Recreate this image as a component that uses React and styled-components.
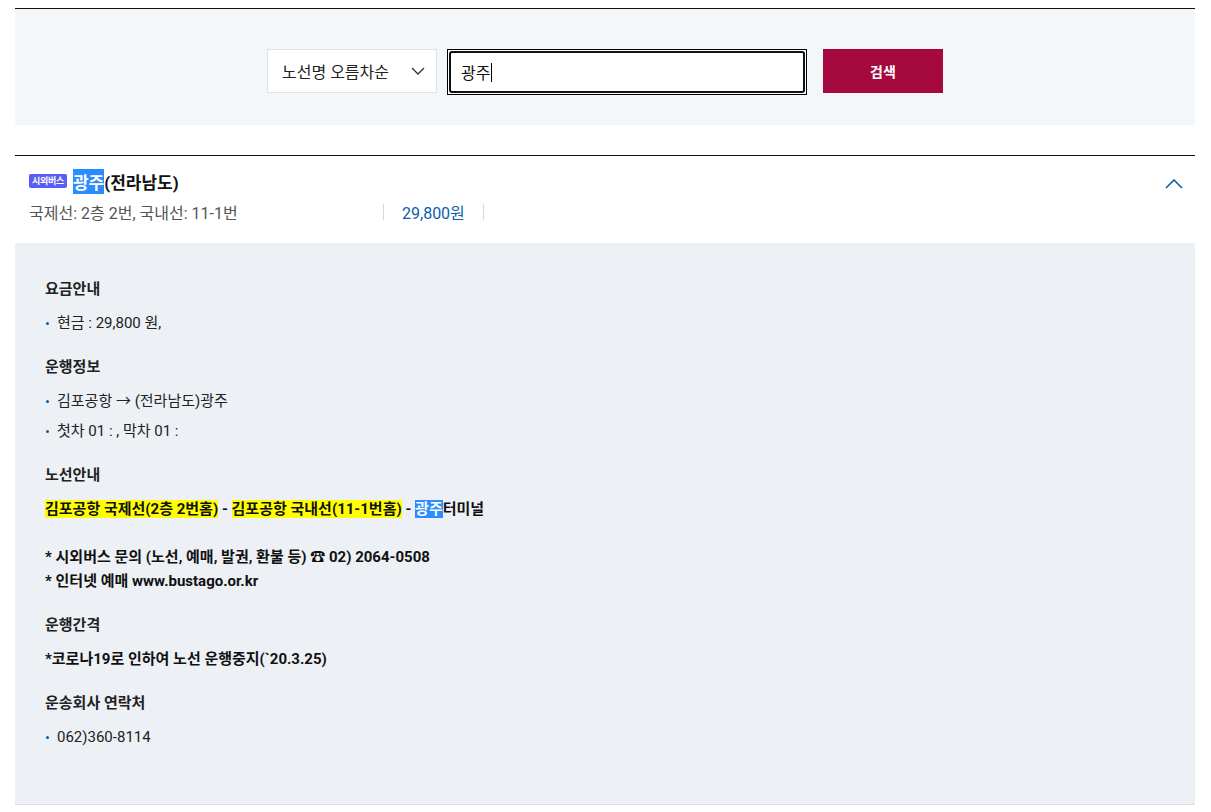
import React from "react";
import styled, { createGlobalStyle } from "styled-components";

const GlobalStyle = createGlobalStyle`
  html, body { margin: 0; padding: 0; background: #fff; }
  body {
    font-family: Roboto, "Noto Sans CJK KR", sans-serif;
    color: #222;
  }
  * { box-sizing: border-box; }
`;

const Page = styled.div`
  padding: 8px 16px 0 15px;
`;

const SearchPanel = styled.div`
  border-top: 1px solid #111;
  background: #f4f7fa;
  display: flex;
  justify-content: center;
  align-items: flex-start;
  padding: 40px 0 30px;
`;

const SelectBox = styled.div`
  width: 170px;
  height: 44px;
  background: #fff;
  border: 1px solid #dfe3e8;
  display: flex;
  align-items: center;
  justify-content: space-between;
  padding: 0 11px 0 14px;
  font-size: 16px;
  color: #222;
`;

const InputFrame = styled.div`
  width: 360px;
  height: 46px;
  margin-left: 10px;
  border: 1px solid #000;
  padding: 1px;
  background: #fff;
  display: flex;
`;

const InputInner = styled.div`
  flex: 1;
  border: 2px solid #111;
  border-radius: 3px;
  display: flex;
  align-items: center;
  padding: 0 10px;
  font-size: 16px;
  color: #111;
`;

const Caret = styled.span`
  display: inline-block;
  width: 1px;
  height: 19px;
  background: #000;
  margin-left: 1px;
`;

const SearchButton = styled.button`
  width: 120px;
  height: 44px;
  margin-left: 16px;
  border: none;
  background: #a6093d;
  color: #fff;
  font-family: Roboto, "Noto Sans CJK KR", sans-serif;
  font-size: 14px;
  font-weight: 700;
  cursor: pointer;
`;

const ResultList = styled.div`
  margin-top: 30px;
  border-top: 1px solid #111;
`;

const ResultHeader = styled.div`
  background: #fff;
  padding: 12px 12px 20px 14px;
`;

const TitleRow = styled.div`
  display: flex;
  align-items: center;
  justify-content: space-between;
  height: 26px;
`;

const Title = styled.div`
  display: flex;
  align-items: center;
  font-size: 17px;
  font-weight: 700;
  color: #111;
`;

const Badge = styled.span`
  display: inline-flex;
  align-items: center;
  height: 14px;
  padding: 0 3px;
  margin-right: 6px;
  background: #5b5cf3;
  border-radius: 2px;
  color: #fff;
  font-size: 9px;
  font-weight: 700;
  line-height: 1;
  letter-spacing: -0.3px;
`;

const Selected = styled.span`
  background: #2b8cff;
  color: #fff;
`;

const Marked = styled.span`
  background: #ffff00;
`;

const ToggleIcon = styled.svg`
  display: block;
  margin-top: 5px;
`;

const SubRow = styled.div`
  display: flex;
  align-items: center;
  margin-top: 7px;
  height: 22px;
  font-size: 16px;
`;

const SubInfo = styled.div`
  width: 354px;
  color: #555;
`;

const Divider = styled.span`
  width: 1px;
  height: 16px;
  background: #d6dadf;
`;

const Price = styled.div`
  padding: 0 18px;
  color: #0b5ea8;
`;

const Detail = styled.div`
  background: #edf0f5;
  border-bottom: 1px solid #dadde2;
  padding: 36px 30px 52px;
`;

const Section = styled.section`
  margin-bottom: ${(p) => p.$gap ?? 19}px;
  &:last-child { margin-bottom: 0; }
`;

const Heading = styled.h3`
  margin: 0 0 9px;
  font-size: 15px;
  line-height: 20px;
  font-weight: 700;
  color: #222;
`;

const BulletList = styled.ul`
  list-style: none;
  margin: 0;
  padding: 0;
`;

const BulletItem = styled.li`
  position: relative;
  padding-left: 12px;
  font-size: 15px;
  line-height: 30px;
  color: #222;
  &::before {
    content: "";
    position: absolute;
    left: 1px;
    top: 14px;
    width: 3px;
    height: 3px;
    border-radius: 50%;
    background: #0b5ea8;
  }
`;

const StrongLine = styled.p`
  margin: ${(p) => p.$top ?? 0}px 0 0;
  font-size: 15px;
  font-weight: 700;
  line-height: ${(p) => p.$lh ?? 30}px;
  color: #111;
`;

export default function App() {
  return (
    <>
      <GlobalStyle />
      <Page>
        <SearchPanel>
          <SelectBox>
            <span>노선명 오름차순</span>
            <svg width="14" height="8" viewBox="0 0 14 8">
              <polyline points="1,1 7,7 13,1" fill="none" stroke="#333" strokeWidth="1.3" />
            </svg>
          </SelectBox>
          <InputFrame>
            <InputInner>
              광주<Caret />
            </InputInner>
          </InputFrame>
          <SearchButton>검색</SearchButton>
        </SearchPanel>

        <ResultList>
          <ResultHeader>
            <TitleRow>
              <Title>
                <Badge>시외버스</Badge>
                <Selected>광주</Selected>(전라남도)
              </Title>
              <ToggleIcon width="18" height="10" viewBox="0 0 18 10">
                <polyline points="1,9 9,1 17,9" fill="none" stroke="#0b5ea8" strokeWidth="1.6" />
              </ToggleIcon>
            </TitleRow>
            <SubRow>
              <SubInfo>국제선: 2층 2번, 국내선: 11-1번</SubInfo>
              <Divider />
              <Price>29,800원</Price>
              <Divider />
            </SubRow>
          </ResultHeader>

          <Detail>
            <Section>
              <Heading>요금안내</Heading>
              <BulletList>
                <BulletItem>현금 : 29,800 원,</BulletItem>
              </BulletList>
            </Section>
            <Section>
              <Heading>운행정보</Heading>
              <BulletList>
                <BulletItem>김포공항 → (전라남도)광주</BulletItem>
                <BulletItem>첫차 01 : , 막차 01 :</BulletItem>
              </BulletList>
            </Section>
            <Section $gap={22}>
              <Heading>노선안내</Heading>
              <StrongLine>
                <Marked>김포공항 국제선(2층 2번홈)</Marked> - <Marked>김포공항 국내선(11-1번홈)</Marked> -{" "}
                <Selected>광주</Selected>터미널
              </StrongLine>
              <StrongLine $top={21} $lh={24}>
                * 시외버스 문의 (노선, 예매, 발권, 환불 등) ☎ 02) 2064-0508
                <br />* 인터넷 예매 www.bustago.or.kr
              </StrongLine>
            </Section>
            <Section>
              <Heading>운행간격</Heading>
              <StrongLine>*코로나19로 인하여 노선 운행중지(`20.3.25)</StrongLine>
            </Section>
            <Section>
              <Heading>운송회사 연락처</Heading>
              <BulletList>
                <BulletItem>062)360-8114</BulletItem>
              </BulletList>
            </Section>
          </Detail>
        </ResultList>
      </Page>
    </>
  );
}
